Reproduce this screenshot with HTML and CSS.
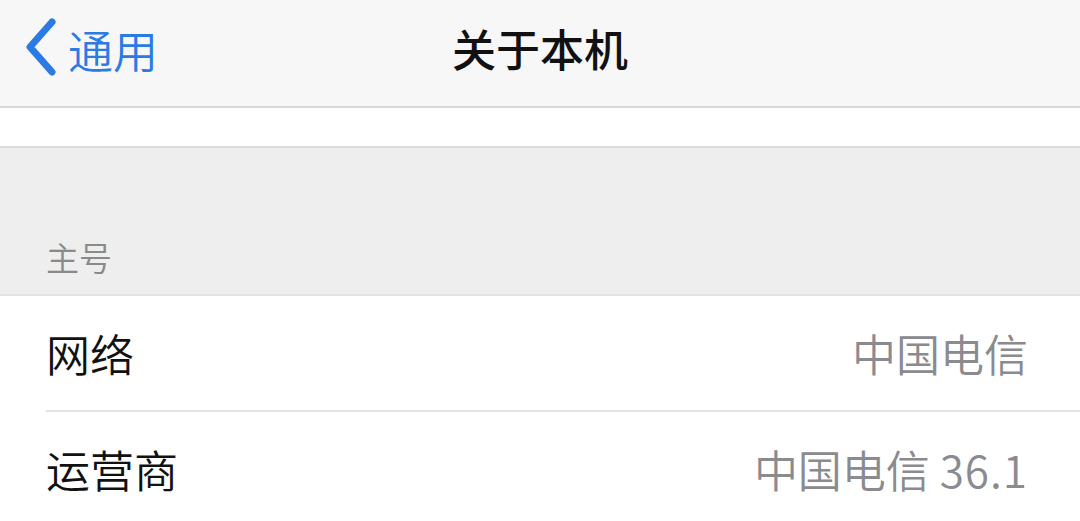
FILE: index.html
```html
<!DOCTYPE html>
<html lang="zh-CN">
<head>
    <meta charset="UTF-8">
    <meta name="viewport" content="width=device-width, initial-scale=1.0">
    <title>关于本机</title>
    <link rel="stylesheet" href="styles.css">
</head>
<body>
    <header class="navbar">
        <a class="back" href="#">
            <svg class="chevron" viewBox="0 0 34 58" width="34" height="58">
                <path d="M29 4 L7 29 L29 54" fill="none" stroke="currentColor" stroke-width="7" stroke-linecap="round" stroke-linejoin="round"/>
            </svg>
            <span>通用</span>
        </a>
        <h1 class="title">关于本机</h1>
        <div></div>
    </header>

    <div class="top-strip"></div>

    <div class="section-header">主号</div>

    <ul class="list">
        <li class="row">
            <span class="label">网络</span>
            <span class="value">中国电信</span>
        </li>
        <li class="row">
            <span class="label">运营商</span>
            <span class="value">中国电信 <span class="num">36.1</span></span>
        </li>
    </ul>
</body>
</html>
```

FILE: styles.css
```css
body {
    margin: 0;
    font-family: "Noto Sans CJK SC", "Noto Sans", sans-serif;
    background-color: #efefef;
    overflow: hidden;
}
.navbar {
    height: 106px;
    background: #f7f7f7;
    border-bottom: 2px solid #d8d8d8;
    display: grid;
    grid-template-columns: 1fr auto 1fr;
    align-items: center;
}
.back {
    display: flex;
    align-items: center;
    gap: 11px;
    padding-left: 23px;
    color: #2c7ae4;
    text-decoration: none;
    font-size: 45px;
    font-weight: 350;
    line-height: 1;
}
.chevron {
    display: block;
    margin-top: -12px;
}
.back span {
    margin-top: -8px;
}
.title {
    margin: 0 0 10px;
    font-size: 44px;
    font-weight: 500;
    color: #111;
    line-height: 1;
}
.top-strip {
    height: 38px;
    background: #fff;
    border-bottom: 2px solid #dcdcdc;
}
.section-header {
    height: 148px;
    box-sizing: border-box;
    padding: 0 0 20px 46px;
    display: flex;
    align-items: flex-end;
    font-size: 33px;
    font-weight: 350;
    line-height: 1;
    color: #8a8a8a;
    background: #eeeeee;
    border-bottom: 2px solid #e2e2e2;
}
.list {
    list-style: none;
    margin: 0;
    padding: 0 0 0 46px;
    background: #fff;
}
.row {
    height: 114px;
    display: flex;
    align-items: center;
    justify-content: space-between;
    padding-right: 52px;
    font-size: 44px;
    font-weight: 350;
    line-height: 1;
}
.row + .row {
    border-top: 2px solid #e3e3e3;
}
.label {
    color: #111;
}
.value {
    color: #8a8a8f;
}
.num {
    letter-spacing: 1px;
}
```
